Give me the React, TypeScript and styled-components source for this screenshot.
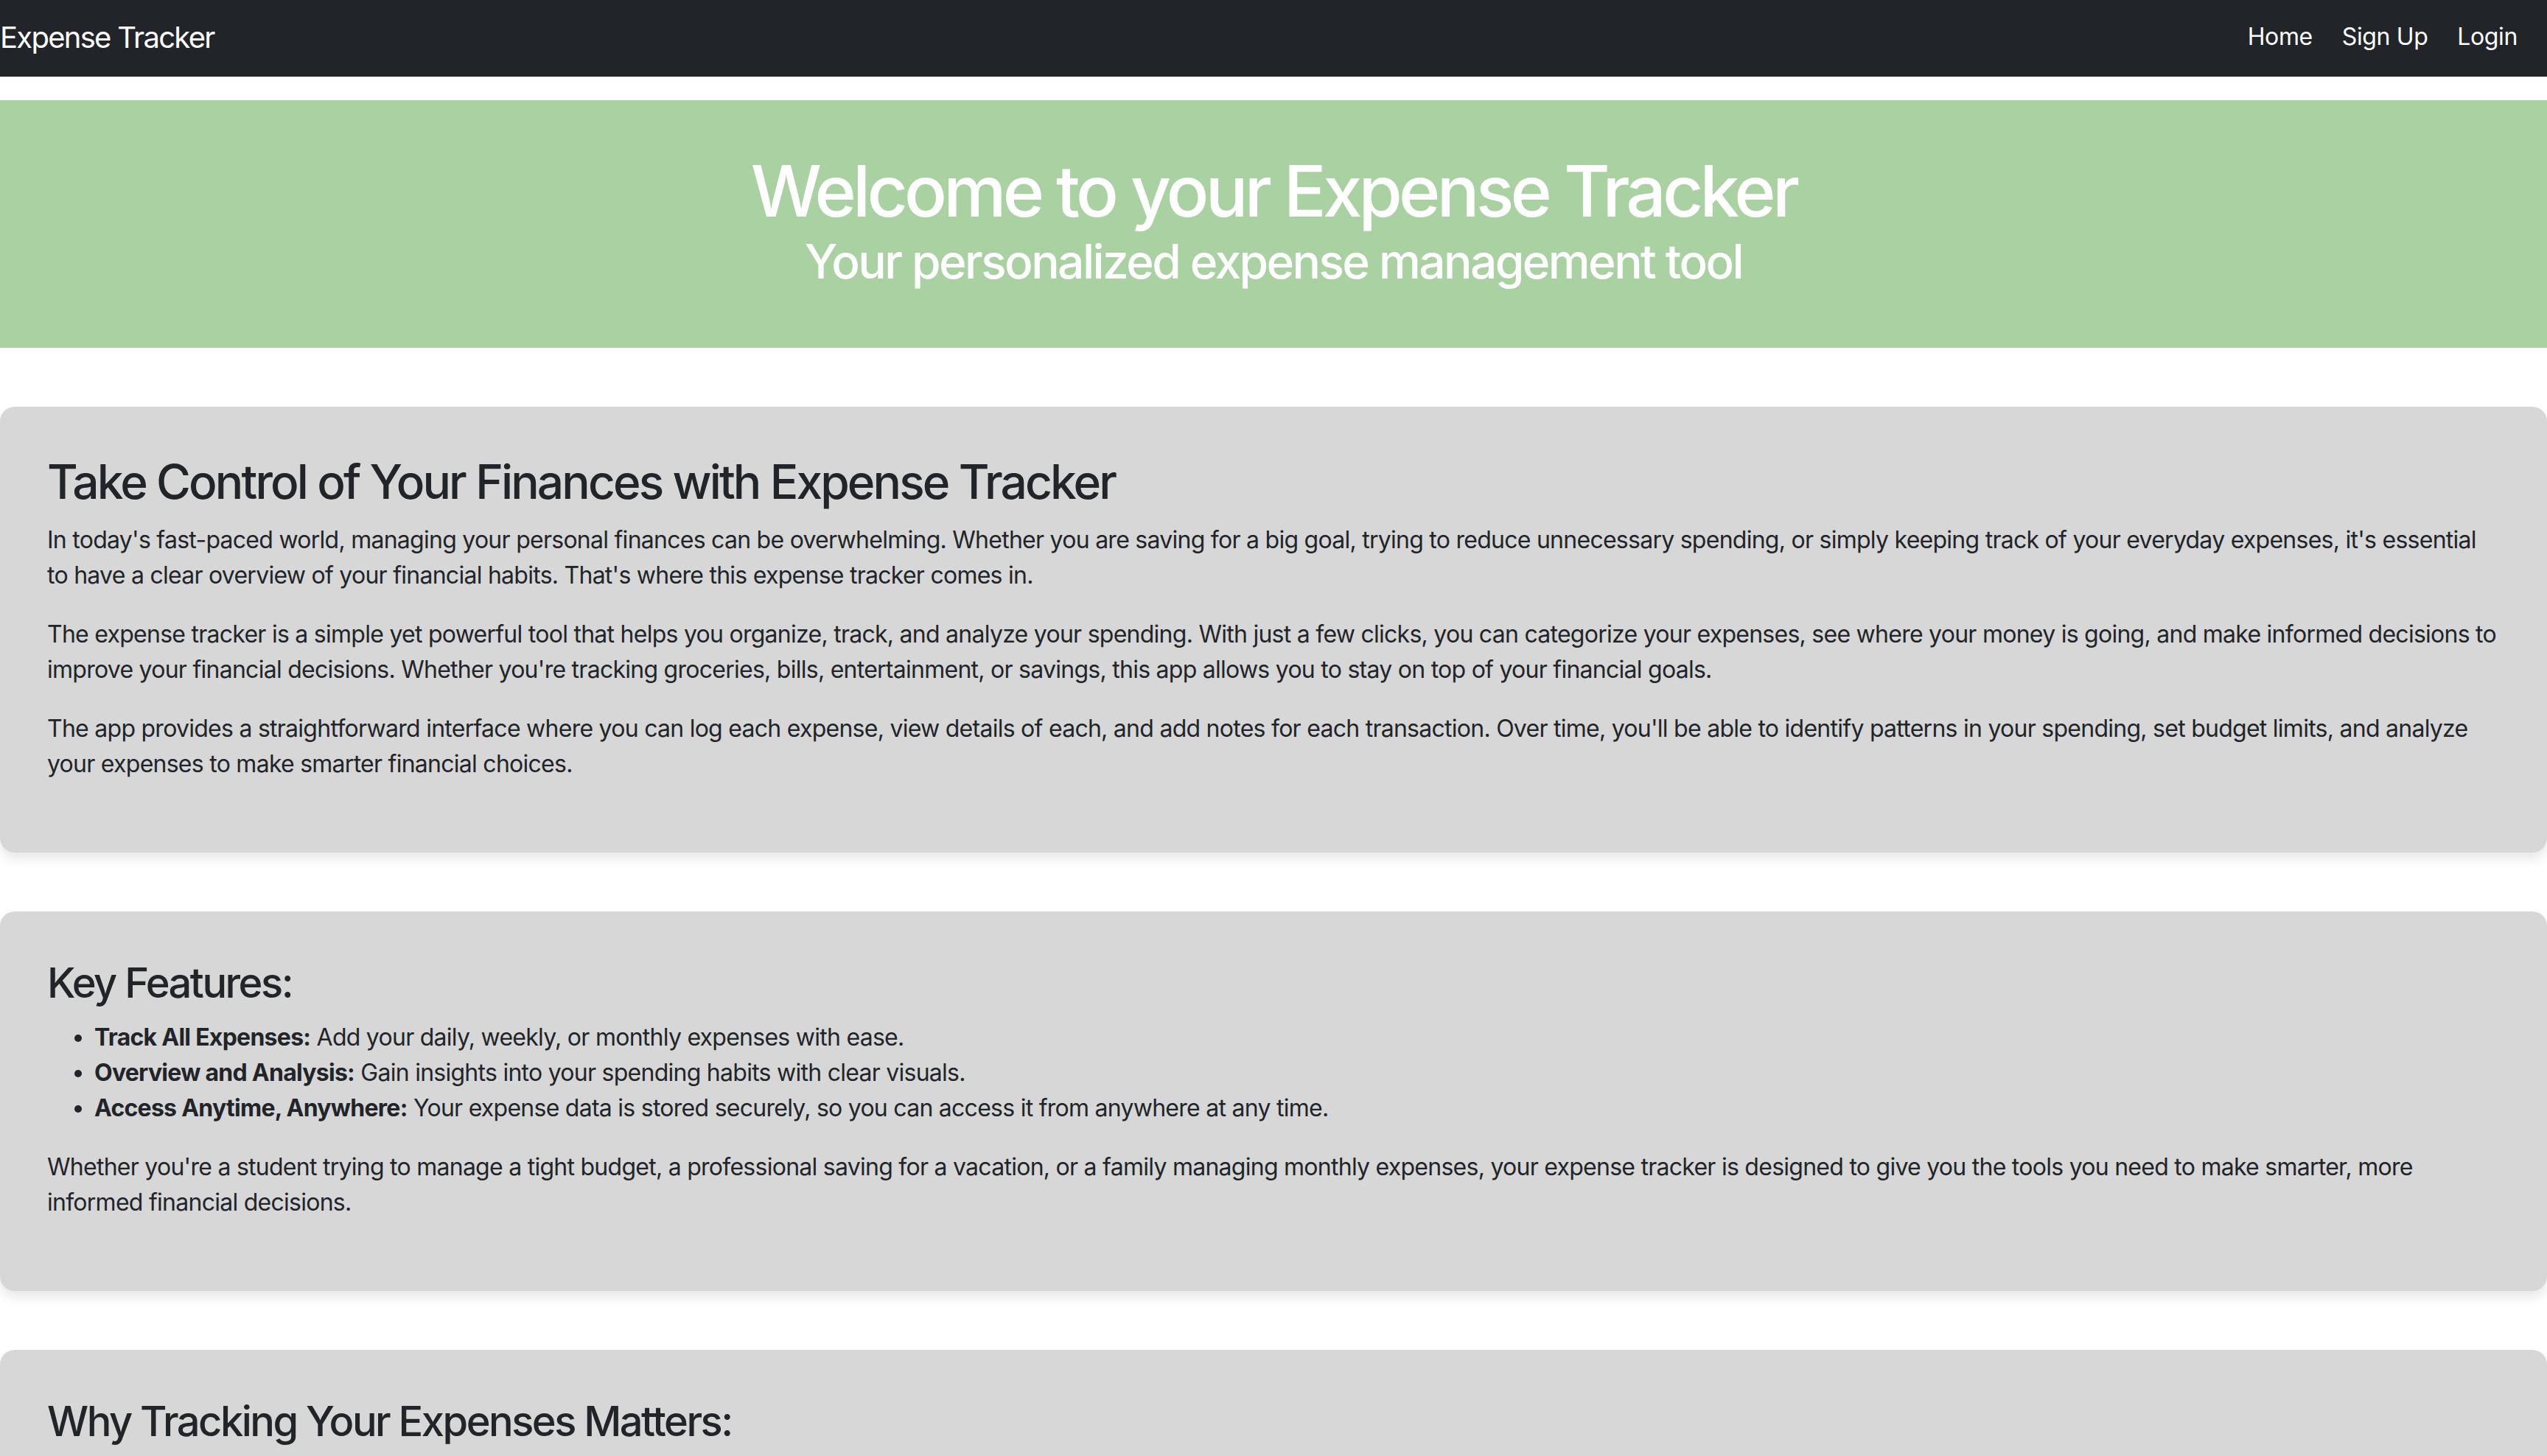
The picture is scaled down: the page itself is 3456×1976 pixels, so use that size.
import React from "react";
import styled, { createGlobalStyle } from "styled-components";

const GlobalStyle = createGlobalStyle`
  *, *::before, *::after { box-sizing: border-box; }
  html, body { margin: 0; padding: 0; }
  body {
    background: #ffffff;
    color: #212529;
    font-family: "Inter", "Noto Sans", sans-serif;
    font-size: 32px;
    line-height: 1.5;
    letter-spacing: -0.023em;
    -webkit-font-smoothing: antialiased;
  }
`;

const Page = styled.div`
  display: flex;
  flex-direction: column;
  width: 100%;
`;

const Navbar = styled.nav`
  display: flex;
  align-items: center;
  justify-content: space-between;
  height: 104px;
  background: #212529;
  padding: 0 20px 0 0;
`;

const Brand = styled.a`
  color: #ffffff;
  font-size: 40px;
  line-height: 1.5;
  letter-spacing: -0.043em;
  text-decoration: none;
  margin-top: -2px;
`;

const NavList = styled.ul`
  display: flex;
  list-style: none;
  margin: 0;
  padding: 0;
`;

const NavLink = styled.a`
  display: block;
  color: #ffffff;
  font-size: 32px;
  line-height: 1.5;
  letter-spacing: -0.012em;
  padding: 0 20px;
  text-decoration: none;
  margin-top: -4px;
`;

const Hero = styled.header`
  margin-top: 32px;
  background: #aad1a2;
  padding: 66px 32px 62px;
  text-align: center;
  color: #ffffff;
`;

const HeroTitle = styled.h1`
  margin: 0;
  font-size: 96px;
  font-weight: 500;
  line-height: 1.2;
  letter-spacing: -0.05em;
`;

const HeroSubtitle = styled.h2`
  margin: 0 0 16px;
  font-size: 64px;
  font-weight: 500;
  line-height: 1.2;
  letter-spacing: -0.04em;
`;

const Sections = styled.main`
  display: flex;
  flex-direction: column;
  gap: 80px;
  margin-top: 80px;
`;

const Card = styled.section`
  background: #d7d7d7;
  border-radius: 20px;
  padding: 64px 64px;
  box-shadow: 0 8px 16px rgba(0, 0, 0, 0.1);
`;

const CardTitle = styled.h2<{ $size?: number }>`
  margin: 0 0 16px;
  font-size: ${(p) => p.$size ?? 64}px;
  font-weight: 500;
  line-height: 1.2;
  letter-spacing: -0.045em;
`;

const Para = styled.p`
  margin: 0 0 32px;
`;

const List = styled.ul`
  margin: 0 0 32px;
  padding-left: 64px;
`;

const Item = styled.li`
  line-height: 1.5;
`;

const navItems = ["Home", "Sign Up", "Login"];

const features: [string, string][] = [
  ["Track All Expenses:", "Add your daily, weekly, or monthly expenses with ease."],
  ["Overview and Analysis:", "Gain insights into your spending habits with clear visuals."],
  [
    "Access Anytime, Anywhere:",
    "Your expense data is stored securely, so you can access it from anywhere at any time.",
  ],
];

const reasons: [string, string][] = [
  ["Avoid Overspending:", "Knowing where your money goes helps you cut back on unnecessary purchases."],
  ["Reach Your Goals:", "Stay on track with savings goals and plan for the future with confidence."],
  ["Reduce Stress:", "A clear picture of your finances brings peace of mind."],
];

export default function App() {
  return (
    <Page>
      <GlobalStyle />
      <Navbar>
        <Brand href="#">Expense Tracker</Brand>
        <NavList>
          {navItems.map((n) => (
            <li key={n}>
              <NavLink href="#">{n}</NavLink>
            </li>
          ))}
        </NavList>
      </Navbar>

      <Hero>
        <HeroTitle>Welcome to your Expense Tracker</HeroTitle>
        <HeroSubtitle>Your personalized expense management tool</HeroSubtitle>
      </Hero>

      <Sections>
        <Card>
          <CardTitle>Take Control of Your Finances with Expense Tracker</CardTitle>
          <Para>
            In today's fast-paced world, managing your personal finances can be overwhelming. Whether you are
            saving for a big goal, trying to reduce unnecessary spending, or simply keeping track of your everyday
            expenses, it's essential to have a clear overview of your financial habits. That's where this expense
            tracker comes in.
          </Para>
          <Para>
            The expense tracker is a simple yet powerful tool that helps you organize, track, and analyze your
            spending. With just a few clicks, you can categorize your expenses, see where your money is going, and
            make informed decisions to improve your financial decisions. Whether you're tracking groceries, bills,
            entertainment, or savings, this app allows you to stay on top of your financial goals.
          </Para>
          <Para>
            The app provides a straightforward interface where you can log each expense, view details of each, and
            add notes for each transaction. Over time, you'll be able to identify patterns in your spending, set
            budget limits, and analyze your expenses to make smarter financial choices.
          </Para>
        </Card>

        <Card>
          <CardTitle as="h3" $size={56}>
            Key Features:
          </CardTitle>
          <List>
            {features.map(([b, t]) => (
              <Item key={b}>
                <strong>{b}</strong> {t}
              </Item>
            ))}
          </List>
          <Para>
            Whether you're a student trying to manage a tight budget, a professional saving for a vacation, or a
            family managing monthly expenses, your expense tracker is designed to give you the tools you need to
            make smarter, more informed financial decisions.
          </Para>
        </Card>

        <Card>
          <CardTitle as="h3" $size={56}>
            Why Tracking Your Expenses Matters:
          </CardTitle>
          <List>
            {reasons.map(([b, t]) => (
              <Item key={b}>
                <strong>{b}</strong> {t}
              </Item>
            ))}
          </List>
          <Para>
            Start today and take the first step toward financial freedom by keeping every expense in one place.
          </Para>
        </Card>
      </Sections>
    </Page>
  );
}
